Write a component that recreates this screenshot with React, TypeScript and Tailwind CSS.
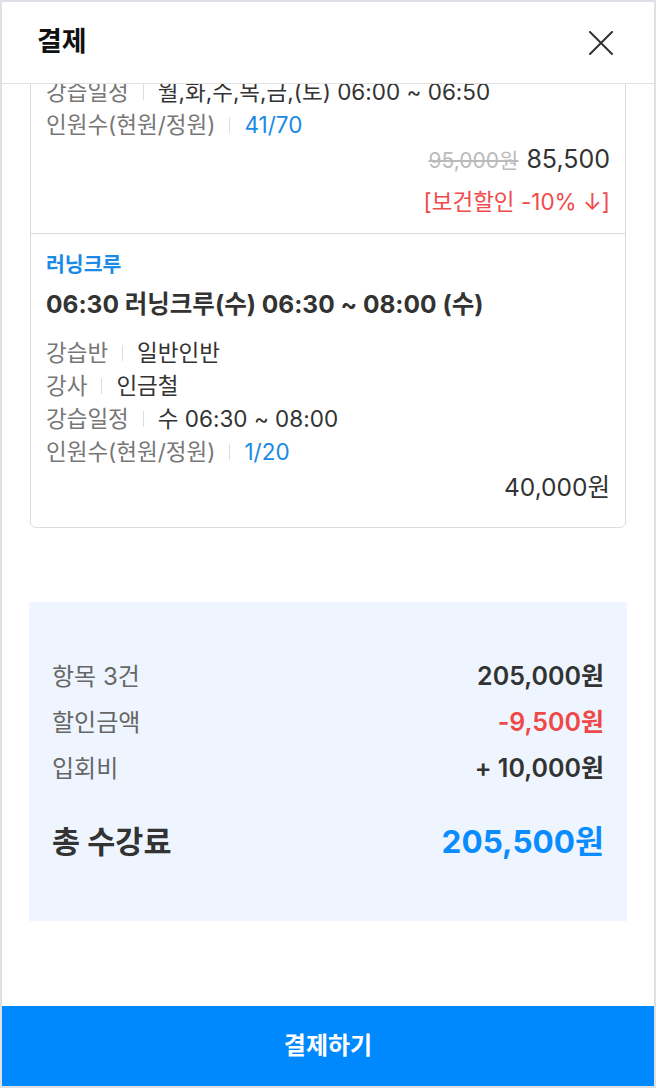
const font = { fontFamily: 'Inter, "Noto Sans CJK KR", sans-serif' };

type Row = { label: string; value: string; blue?: boolean };

const Detail = ({ label, value, blue }: Row) => (
  <div className="flex items-center h-[33px] text-[22.5px] leading-[33px]">
    <span className="text-[#777]">{label}</span>
    <span className="mx-[14px] w-px h-[16px] bg-[#ddd]" />
    <span className={blue ? "text-[#1a8ae6]" : "text-[#333]"}>{value}</span>
  </div>
);

const Summary = ({ label, value, color }: { label: string; value: string; color: string }) => (
  <div className="flex justify-between items-center h-[46px]">
    <span className="text-[24px] text-[#666]">{label}</span>
    <span className={`text-[25px] font-semibold ${color}`}>{value}</span>
  </div>
);

const App = () => {
  return (
    <div
      style={font}
      className="w-[656px] h-[1088px] border-2 border-[#dde1e7] bg-white flex flex-col overflow-hidden"
    >
      <header className="h-[82px] shrink-0 border-b border-[#e2e2e2] flex items-center justify-between pl-[35px] pr-[41px] bg-white z-10">
        <h1 className="text-[27px] font-bold text-[#111]">결제</h1>
        <svg width="24" height="24" viewBox="0 0 24 24" fill="none" stroke="#333" strokeWidth="2" strokeLinecap="round">
          <path d="M1 1L23 23M23 1L1 23" />
        </svg>
      </header>

      <div className="flex-1 overflow-hidden">
        <div className="-mt-[10px] mx-[28px] border border-[#dcdcdc] rounded-b-[6px] divide-y divide-[#dcdcdc]">
          <div className="px-[15px] pb-[17px]">
            <Detail label="강습일정" value="월,화,수,목,금,(토) 06:00 ~ 06:50" />
            <Detail label="인원수(현원/정원)" value="41/70" blue />
            <div className="mt-[3px] flex justify-end items-baseline gap-[8px] leading-[30px]">
              <span className="text-[21px] text-[#bbb] line-through">95,000원</span>
              <span className="text-[25px] text-[#333]">85,500</span>
            </div>
            <div className="mt-[12px] text-right text-[22.5px] leading-[28px] text-[#f04b4b]">
              [보건할인 -10% ↓]
            </div>
          </div>

          <div className="px-[15px] pt-[18px] pb-[25px]">
            <div className="text-[20.5px] leading-[26px] font-semibold text-[#1a8ae6]">러닝크루</div>
            <div className="mt-[11px] text-[24.5px] leading-[30px] font-bold text-[#333]">
              06:30 러닝크루(수) 06:30 ~ 08:00 (수)
            </div>
            <div className="mt-[17px]">
              <Detail label="강습반" value="일반인반" />
              <Detail label="강사" value="인금철" />
              <Detail label="강습일정" value="수 06:30 ~ 08:00" />
              <Detail label="인원수(현원/정원)" value="1/20" blue />
            </div>
            <div className="mt-[4px] text-right text-[24.5px] leading-[30px] text-[#333]">40,000원</div>
          </div>
        </div>

        <div className="mt-[74px] mx-[27px] bg-[#eef5fe] px-[23px] pt-[52px] pb-[57px]">
          <Summary label="항목 3건" value="205,000원" color="text-[#333]" />
          <Summary label="할인금액" value="-9,500원" color="text-[#f04848]" />
          <Summary label="입회비" value="+ 10,000원" color="text-[#333]" />
          <div className="mt-[28px] flex justify-between items-center h-[44px]">
            <span className="text-[30.5px] font-bold text-[#333]">총 수강료</span>
            <span className="text-[31.5px] font-bold text-[#0a8cff]">205,500원</span>
          </div>
        </div>
      </div>

      <button className="h-[80px] shrink-0 bg-[#0088ff] text-white text-[24px] font-bold">결제하기</button>
    </div>
  );
};

export default App;
